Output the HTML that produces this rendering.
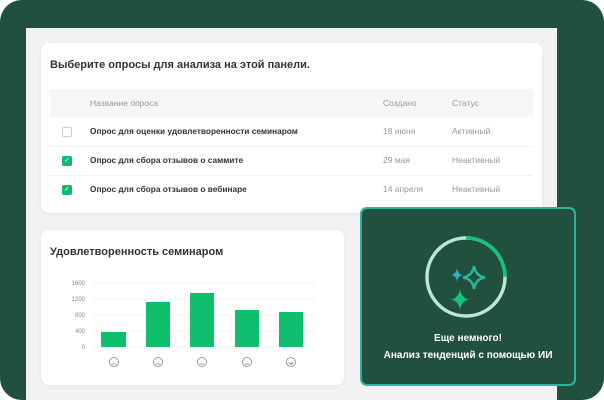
<!DOCTYPE html><html><head><meta charset="utf-8"><style>
*{margin:0;padding:0;box-sizing:border-box}
body{width:604px;height:400px;background:#fff;font-family:"Liberation Sans",sans-serif;position:relative;overflow:hidden}
.bg{position:absolute;left:0;top:0;width:604px;height:400px;background:#22503f;border-radius:22px}
.panel{position:absolute;left:26px;top:28px;width:531px;height:372px;background:#f2f2f2}
.card{position:absolute;background:#fff;border-radius:8px;box-shadow:0 1px 4px rgba(0,0,0,.06)}
.t{position:absolute;font-size:8.5px;white-space:nowrap;color:#999}
.b{color:#333;font-weight:bold;font-size:8.3px}
.cb{position:absolute;left:62px;width:10px;height:10px;border-radius:2px}
</style></head><body>
<div class="bg"></div>
<div class="panel"></div>
<div class="card" style="left:41px;top:43px;width:501px;height:170px"></div>
<div class="t" style="left:50px;top:59px;font-size:11px;font-weight:bold;color:#333">Выберите опросы для анализа на этой панели.</div>
<div style="position:absolute;left:50px;top:89px;width:483px;height:28px;background:#f5f6f7"></div>
<div class="t" style="left:90px;top:98px">Название опроса</div>
<div class="t" style="left:383px;top:98px">Создано</div>
<div class="t" style="left:452px;top:98px">Статус</div>
<div style="position:absolute;left:50px;top:146px;width:483px;height:1px;background:#f0f0f0"></div>
<div style="position:absolute;left:50px;top:175px;width:483px;height:1px;background:#f0f0f0"></div>
<div class="cb" style="top:127px;border:1px solid #ccc"></div>
<div class="cb" style="top:156px;background:#12b86e;color:#fff;font-size:7px;text-align:center;line-height:10px">✓</div>
<div class="cb" style="top:185px;background:#12b86e;color:#fff;font-size:7px;text-align:center;line-height:10px">✓</div>
<div class="t b" style="left:90px;top:126px">Опрос для оценки удовлетворенности семинаром</div>
<div class="t b" style="left:90px;top:155px">Опрос для сбора отзывов о саммите</div>
<div class="t b" style="left:90px;top:184px">Опрос для сбора отзывов о вебинаре</div>
<div class="t" style="left:383px;top:126px">18 июня</div><div class="t" style="left:452px;top:126px">Активный</div>
<div class="t" style="left:383px;top:155px">29 мая</div><div class="t" style="left:452px;top:155px">Неактивный</div>
<div class="t" style="left:383px;top:184px">14 апреля</div><div class="t" style="left:452px;top:184px">Неактивный</div>

<div class="card" style="left:41px;top:230px;width:303px;height:155px"></div>
<div class="t" style="left:50px;top:246px;font-size:11px;font-weight:bold;color:#333">Удовлетворенность семинаром</div>
<svg style="position:absolute;left:0;top:0" width="604" height="400">
<g font-family="Liberation Sans" font-size="6" fill="#888" text-anchor="end">
<text x="85" y="285">1600</text><text x="85" y="301">1200</text><text x="85" y="317">800</text><text x="85" y="333">400</text><text x="85" y="349">0</text></g>
<g stroke="#f2f2f2"><line x1="92" y1="283" x2="316" y2="283"/><line x1="92" y1="299" x2="316" y2="299"/><line x1="92" y1="315" x2="316" y2="315"/><line x1="92" y1="331" x2="316" y2="331"/><line x1="92" y1="347" x2="316" y2="347"/></g>
<g fill="#0fbf6e"><rect x="101" y="332" width="25" height="15"/><rect x="146" y="302" width="24" height="45"/><rect x="190" y="293" width="24" height="54"/><rect x="235" y="310" width="24" height="37"/><rect x="279" y="312" width="24" height="35"/></g>
<g fill="none" stroke="#888" stroke-width=".8">
<circle cx="114" cy="362" r="4.5"/><circle cx="158" cy="362" r="4.5"/><circle cx="202" cy="362" r="4.5"/><circle cx="247" cy="362" r="4.5"/><circle cx="291" cy="362" r="4.5"/>
<path d="M112 364.5q2-1.5 4 0M156 364.5q2-1.5 4 0M200 364h4M245 363.5q2 1.5 4 0M289 363q2 2.5 4 0z"/></g>
<rect x="361" y="208" width="214" height="177" rx="6" fill="#22503f" stroke="#2bb59a" stroke-width="2"/>
<circle cx="466" cy="277" r="39" fill="none" stroke="#bfe6d5" stroke-width="3.5"/>
<path d="M466 238A39 39 0 0 1 505 277" fill="none" stroke="#15c27a" stroke-width="3.5"/>
<path d="M474 266q1.5 10 11 11.5q-9.5 1.5-11 11.5q-1.5-10-11-11.5q9.5-1.5 11-11.5z" fill="none" stroke="#2bb59a" stroke-width="2.5"/>
<path d="M457 268q.7 6 5.5 7q-4.8 1-5.5 7q-.7-6-5.5-7q4.8-1 5.5-7z" fill="#2ab0d0"/>
<path d="M460 289q1.2 9 9 10.5q-7.8 1.5-9 10.5q-1.2-9-9-10.5q7.8-1.5 9-10.5z" fill="#15c27a"/>
</svg>
<div class="t" style="left:361px;width:214px;text-align:center;top:333px;color:#fff;font-size:10px;font-weight:bold">Еще немного!</div>
<div class="t" style="left:361px;width:214px;text-align:center;top:350px;color:#fff;font-size:10px;font-weight:bold">Анализ тенденций с помощью ИИ</div>
</body></html>
